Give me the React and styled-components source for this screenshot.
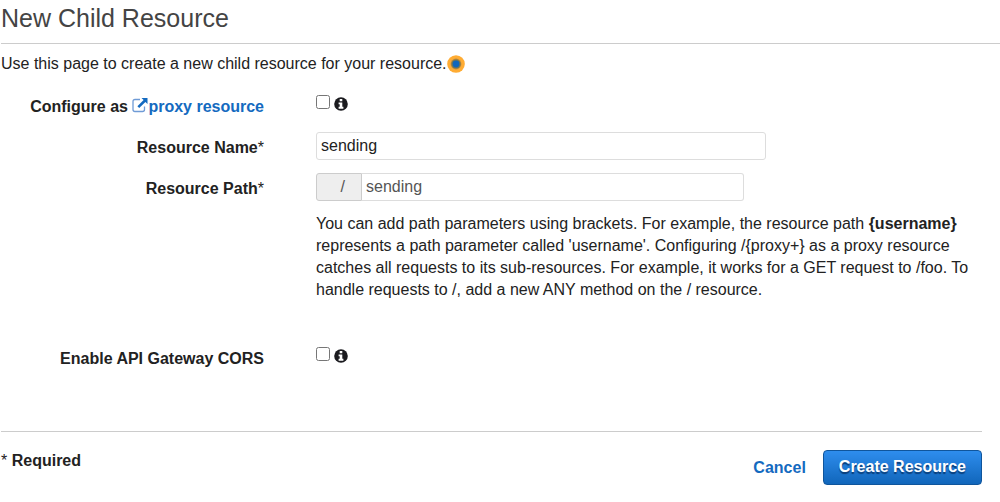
import React from "react";
import styled, { createGlobalStyle } from "styled-components";

const GlobalStyle = createGlobalStyle`
  *, *::before, *::after { box-sizing: border-box; }
  body {
    margin: 0;
    background: #fff;
    color: #222;
    font: 16px/22px "Liberation Sans", Arial, sans-serif;
  }
`;

const Page = styled.main`
  padding-left: 1px;
`;

const Title = styled.h1`
  margin: 0;
  padding: 2px 0 9px;
  border-bottom: 1px solid #ccc;
  color: #444;
  font-size: 25px;
  font-weight: 400;
  line-height: 32px;
`;

const Intro = styled.p`
  display: flex;
  align-items: center;
  margin: 0;
  padding: 9px 0 16px;
`;

const Beacon = styled.svg`
  width: 18px;
  height: 18px;
`;

const Form = styled.form`
  margin-right: 18px;
`;

const Row = styled.div`
  display: grid;
  grid-template-columns: 263px minmax(0, 660px);
  column-gap: 52px;
  align-items: start;
  min-height: ${({ $height }) => $height}px;
`;

const Label = styled.label`
  padding-top: 5px;
  font-weight: 700;
  text-align: right;
  white-space: nowrap;
`;

const Star = styled.span`
  font-weight: 400;
`;

const Link = styled.a`
  color: #146ac0;
  font-weight: 700;
  text-decoration: none;
`;

const ExternalIcon = styled.svg`
  width: 16px;
  height: 16px;
  vertical-align: -2px;
`;

const CheckCell = styled.div`
  display: flex;
  align-items: flex-start;
  gap: 4px;
  padding-top: 4px;
`;

const Check = styled.input`
  width: 14px;
  height: 14px;
  margin: 0;
`;

const InfoButton = styled.button`
  display: flex;
  padding: 2px 0 0;
  border: 0;
  background: none;
  color: #1b1b1f;
`;

const InfoIcon = styled.svg`
  width: 14px;
  height: 14px;
`;

const TextInput = styled.input`
  width: 100%;
  max-width: 450px;
  height: 28px;
  padding: 0 4px;
  border: 1px solid #ddd;
  border-radius: 3px;
  background: #fff;
  color: #222;
  font: inherit;
`;

const PathGroup = styled.div`
  display: flex;
  max-width: 428px;
`;

const Prefix = styled.span`
  flex: none;
  width: 46px;
  height: 28px;
  padding-right: 16px;
  border: 1px solid #ccc;
  border-radius: 3px 0 0 3px;
  background: #eee;
  color: #555;
  line-height: 26px;
  text-align: right;
`;

const PathInput = styled(TextInput)`
  flex: 1;
  min-width: 0;
  border-left: 0;
  border-radius: 0 3px 3px 0;
  color: #555;
`;

const Help = styled.p`
  margin: 0;
  padding-top: 12px;
`;

const Footer = styled.footer`
  display: flex;
  justify-content: space-between;
  align-items: flex-start;
  padding-top: 18px;
  border-top: 1px solid #ccc;
`;

const Required = styled.strong`
  font-weight: 700;
`;

const Actions = styled.div`
  display: flex;
  align-items: center;
  gap: 17px;
`;

const CancelButton = styled.button`
  padding: 0;
  border: 0;
  background: none;
  color: #146ac0;
  font: inherit;
  font-weight: 700;
`;

const SubmitButton = styled.button`
  height: 35px;
  padding: 0 15px 2px;
  border: 1px solid #0f559c;
  border-radius: 4px;
  background: linear-gradient(#2e8ded, #1166bb);
  color: #fff;
  font: inherit;
  font-weight: 700;
  text-shadow: 0 2px 1px #0a3d78;
`;

function CheckField({ id, info }) {
  return (
    <CheckCell>
      <Check id={id} type="checkbox" />
      <InfoButton type="button" aria-label={info}>
        <InfoIcon viewBox="0 0 14 14" aria-hidden="true">
          <circle cx="7" cy="7" r="6.8" fill="currentColor" />
          <path d="M5.700 2H8.300V4.200H5.700ZM4.600 5.400H8.300V9.800H9.400V11.700H4.600V9.800H5.700V7.300H4.600Z" fill="#fff" />
        </InfoIcon>
      </InfoButton>
    </CheckCell>
  );
}

export default function App() {
  return (
    <>
      <GlobalStyle />
      <Page>
        <Title>New Child Resource</Title>
        <Intro>
          Use this page to create a new child resource for your resource.
          <Beacon viewBox="0 0 18 18" aria-hidden="true">
            <circle cx="9" cy="9" r="8.8" fill="#ffac33" />
            <circle cx="9" cy="9" r="5.4" fill="#b88a42" />
            <circle cx="9" cy="9" r="4.6" fill="#76764f" />
            <circle cx="9" cy="9" r="3.4" fill="#1166bb" />
          </Beacon>
        </Intro>
        <Form onSubmit={(e) => e.preventDefault()}>
          <Row $height={41}>
            <Label htmlFor="proxy">
              Configure as{" "}
              <Link href="#proxy-resource">
                <ExternalIcon viewBox="0 0 16 16" aria-hidden="true">
                  <path
                    d="M8 1.500H3Q1 1.500 1 3.500V11.500Q1 13.500 3 13.500H10.500Q12.500 13.500 12.500 11.500V8.500"
                    fill="none"
                    stroke="#6f9bd6"
                    strokeWidth="1.3"
                  />
                  <path d="M9.500 0H15.500V6L13.400 3.900L7.200 10.100L5.400 8.300L11.600 2.100Z" fill="#146ac0" />
                </ExternalIcon>
                proxy resource
              </Link>
            </Label>
            <CheckField id="proxy" info="About proxy resources" />
          </Row>
          <Row $height={41}>
            <Label htmlFor="name">
              Resource Name<Star>*</Star>
            </Label>
            <TextInput id="name" defaultValue="sending" />
          </Row>
          <Row $height={170}>
            <Label htmlFor="path">
              Resource Path<Star>*</Star>
            </Label>
            <div>
              <PathGroup>
                <Prefix>/</Prefix>
                <PathInput id="path" defaultValue="sending" />
              </PathGroup>
              <Help>
                You can add path parameters using brackets. For example, the resource path{" "}
                <b>{"{username}"}</b>
                {
                  " represents a path parameter called 'username'. Configuring /{proxy+} as a proxy resource catches all requests to its sub-resources. For example, it works for a GET request to /foo. To handle requests to /, add a new ANY method on the / resource."
                }
              </Help>
            </div>
          </Row>
          <Row $height={88}>
            <Label htmlFor="cors">Enable API Gateway CORS</Label>
            <CheckField id="cors" info="About CORS" />
          </Row>
          <Footer>
            <Required>
              <Star>*</Star> Required
            </Required>
            <Actions>
              <CancelButton type="button">Cancel</CancelButton>
              <SubmitButton type="submit">Create Resource</SubmitButton>
            </Actions>
          </Footer>
        </Form>
      </Page>
    </>
  );
}
